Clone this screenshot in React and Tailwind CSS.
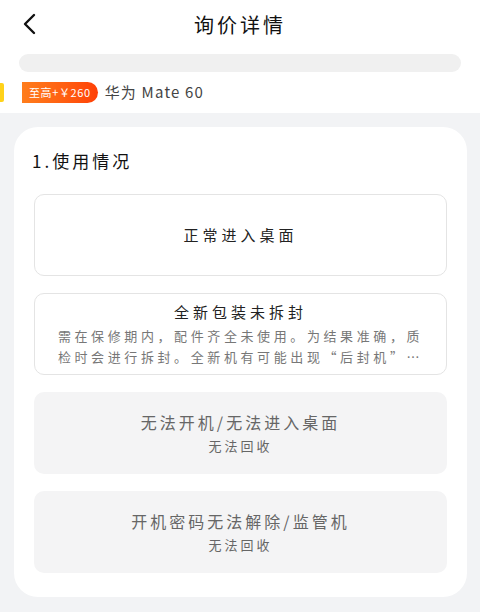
import React from "react";

const font = { fontFamily: '"Noto Sans CJK SC", "Noto Sans", sans-serif' };

const options = [
  { title: "正常进入桌面" },
  {
    title: "全新包装未拆封",
    desc: "需在保修期内，配件齐全未使用。为结果准确，质检时会进行拆封。全新机有可能出现“后封机”等情况，请谨慎选择",
  },
  { title: "无法开机/无法进入桌面", sub: "无法回收", disabled: true },
  { title: "开机密码无法解除/监管机", sub: "无法回收", disabled: true },
];

const Option = ({ title, desc, sub, disabled }) => {
  if (disabled) {
    return (
      <div className="h-[82px] rounded-[10px] bg-[#f4f4f5] flex flex-col items-center justify-center">
        <div className="text-[16px] leading-[22px] text-[#666] tracking-[3px]">{title}</div>
        <div className="mt-[4px] text-[13px] leading-[18px] text-[#666] tracking-[3px]">{sub}</div>
      </div>
    );
  }
  return (
    <div className="h-[82px] rounded-[10px] border border-[#e4e4e4] bg-white flex flex-col items-center justify-center px-[18px]">
      <div className="text-[15px] leading-[22px] text-[#222] tracking-[4px]">{title}</div>
      {desc && (
        <div className="mt-[2px] text-[13px] leading-[21px] text-[#777] tracking-[3.6px] text-center line-clamp-2">
          {desc}
        </div>
      )}
    </div>
  );
};

export default function App() {
  return (
    <div className="w-[480px] h-[612px] bg-white overflow-hidden flex flex-col" style={font}>
      {/* Header */}
      <div className="relative h-[50px] flex items-center justify-center">
        <button className="absolute left-[20px] top-[12px] w-[18px] h-[24px] flex items-center justify-center">
          <svg width="14" height="22" viewBox="0 0 14 22" fill="none">
            <path d="M12 2 L3 11 L12 20" stroke="#111" strokeWidth="2.4" strokeLinecap="round" strokeLinejoin="round" />
          </svg>
        </button>
        <div className="text-[20px] text-[#111] tracking-[3px]">询价详情</div>
      </div>

      {/* Search bar placeholder */}
      <div className="px-[19px] pt-[4px]">
        <div className="h-[18px] rounded-full bg-[#f0f0f0]" />
      </div>

      {/* Product row */}
      <div className="relative h-[41px] flex items-center pl-[22px]">
        <div className="absolute left-0 top-[11px] w-[4px] h-[19px] bg-[#ffd21a] rounded-r-[2px]" />
        <div className="h-[21px] px-[7px] flex items-center rounded-tl-[8px] rounded-r-full bg-gradient-to-r from-[#ff7d1c] to-[#ff3f06] text-white text-[11px] tracking-[0.6px]">
          至高+￥260
        </div>
        <div className="ml-[7px] text-[15px] text-[#444] tracking-[1.2px]">华为 Mate 60</div>
      </div>

      {/* Body */}
      <div className="flex-1 bg-[#f2f3f5] px-[14px] pt-[14px] pr-[13px]">
        <div className="bg-white rounded-[24px] pt-[22px] pb-[24px]">
          <div className="pl-[18px] text-[17px] leading-[24px] text-[#111] tracking-[3px]">1.使用情况</div>
          <div className="mt-[21px] px-[20px] flex flex-col gap-[17px]">
            {options.map((o) => (
              <Option key={o.title} {...o} />
            ))}
          </div>
        </div>
      </div>
    </div>
  );
}
